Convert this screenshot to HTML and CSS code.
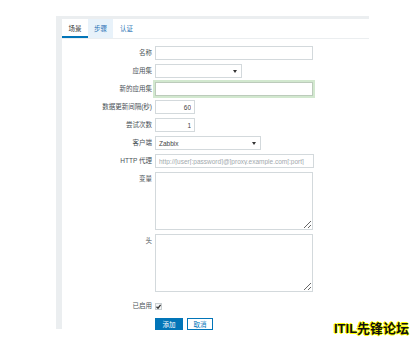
FILE: index.html
```html
<!DOCTYPE html>
<html>
<head>
<meta charset="utf-8">
<link rel="stylesheet" href="styles.css">
</head>
<body>
<div class="frame">
  <div class="tabs">
    <span class="tab active">场景</span>
    <span class="tab hover">步骤</span>
    <span class="tab last">认证</span>
  </div>
  <div class="form">
    <div class="row"><label class="lbl">名称</label><input class="inp w-full" type="text"></div>
    <div class="row"><label class="lbl">应用集</label><div class="sel w-app"><span></span><i class="arrow"></i></div></div>
    <div class="row"><label class="lbl">新的应用集</label><input class="inp w-full focus" type="text"></div>
    <div class="row"><label class="lbl">数据更新间隔(秒)</label><input class="inp w-num" type="text" value="60"></div>
    <div class="row"><label class="lbl">尝试次数</label><input class="inp w-num" type="text" value="1"></div>
    <div class="row"><label class="lbl">客户端</label><div class="sel w-agent"><span>Zabbix</span><i class="arrow"></i></div></div>
    <div class="row"><label class="lbl">HTTP 代理</label><input class="inp w-proxy" type="text" placeholder="http://[user[:password]@]proxy.example.com[:port]"></div>
    <div class="row"><label class="lbl top">变量</label><textarea class="ta"></textarea></div>
    <div class="row"><label class="lbl top">头</label><textarea class="ta"></textarea></div>
    <div class="row chk-row"><label class="lbl">已启用</label>
      <span class="chk"><svg width="7" height="7" viewBox="0 0 7 7"><path d="M1.5 3.8 L3 5.2 L5.6 1.8" fill="none" stroke="#333" stroke-width="1.3"/></svg></span>
    </div>
    <div class="row btn-row"><span class="lbl"></span>
      <button class="btn primary">添加</button>
      <button class="btn secondary">取消</button>
    </div>
  </div>
</div>
<div class="watermark">ITIL先锋论坛</div>
</body>
</html>
```
FILE: styles.css
```css
* { box-sizing: border-box; }
html, body { margin: 0; padding: 0; background: #fff; }
body {
  font-family: "Liberation Sans", "Noto Sans CJK SC", sans-serif;
  font-size: 6.5px;
  color: #4a5257;
  width: 420px;
  height: 337px;
  position: relative;
  overflow: hidden;
}
.frame {
  margin-left: 56px;
  margin-top: 16px;
  width: 313px;
  height: 313px;
  border-top: 3px solid #ebeef0;
  border-left: 6px solid #ebeef0;
  background: #fff;
}
.tabs {
  display: flex;
  height: 20px;
  border-bottom: 1px solid #ebeef0;
}
.tab {
  display: flex;
  align-items: center;
  justify-content: center;
  height: 19px;
  padding: 0;
  white-space: nowrap;
  color: #2a73b5;
  border-bottom: 2px solid transparent;
}
.tab.active {
  color: #333;
  border-bottom-color: #0275b8;
  width: 26px;
}
.tab.hover {
  background: #e8f2fa;
  width: 25px;
}
.tab.last { width: 27px; }
.form {
  display: flex;
  flex-direction: column;
  gap: 4px;
  padding-top: 7px;
}
.row {
  display: flex;
  align-items: center;
  gap: 3px;
}
.lbl {
  width: 90px;
  text-align: right;
  line-height: 14px;
  flex: none;
  white-space: nowrap;
}
.lbl.top { align-self: flex-start; }
.inp, .sel, .ta {
  height: 14px;
  border: 1px solid #d3d9dc;
  background: #fff;
  font: inherit;
  color: #444;
  padding: 0 3px;
  outline: none;
}
.inp::placeholder { color: #a2a9ad; }
.w-full { width: 158px; }
.w-num { width: 40px; text-align: right; }
.w-proxy { width: 159px; }
.focus {
  border-color: #bccbbb;
  box-shadow: 0 0 0 2px #d2e8cf;
}
.sel {
  display: flex;
  align-items: center;
  justify-content: space-between;
  padding: 0 4px 0 3px;
}
.w-app { width: 87px; }
.w-agent { width: 106px; }
.arrow {
  width: 0; height: 0;
  border-left: 2.5px solid transparent;
  border-right: 2.5px solid transparent;
  border-top: 3px solid #333;
}
.ta {
  width: 158px;
  height: 58px;
  resize: both;
  padding: 2px 3px;
}
.chk-row { margin-top: 3px; }
.chk {
  width: 7px; height: 7px;
  border: 1px solid #c9cfd2;
  background: #f4f5f6;
  display: flex;
  align-items: center;
  justify-content: center;
}
.chk svg { display: block; margin: -1px; }
.btn-row { margin-top: 1px; gap: 0; }
.btn-row .lbl { margin-right: 3px; }
.btn {
  height: 12px;
  font: inherit;
  padding: 0;
  display: flex;
  align-items: center;
  justify-content: center;
  border: 1px solid #0275b8;
}
.primary { width: 28px; background: #0275b8; color: #fff; }
.secondary { width: 26px; margin-left: 4px; background: #fff; color: #0275b8; }
.watermark {
  position: absolute;
  left: 334px;
  top: 318px;
  font-size: 13px;
  font-weight: bold;
  color: #111;
  white-space: nowrap;
  text-shadow: 1px 0 0 #ff0, -1px 0 0 #ff0, 0 1px 0 #ff0, 0 -1px 0 #ff0;
}
```
